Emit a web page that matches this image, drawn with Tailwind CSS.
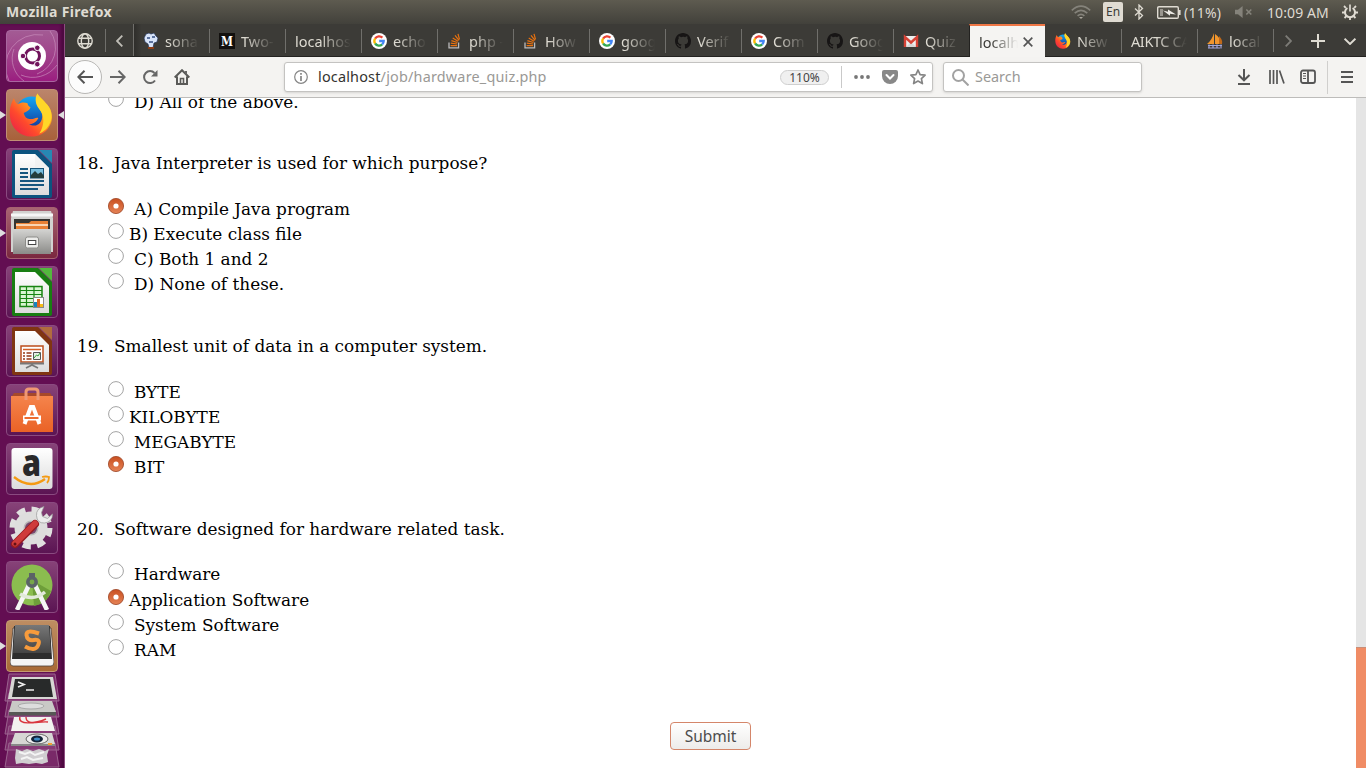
<!DOCTYPE html>
<html lang="en">
<head>
<meta charset="utf-8">
<title>Mozilla Firefox</title>
<script src="https://cdn.jsdelivr.net/npm/@tailwindcss/browser@4"></script>
</head>
<body class="w-[1366px] h-[768px] overflow-hidden bg-white font-['Noto_Sans',sans-serif] flex flex-col">

<svg width="0" height="0" class="absolute">
  <defs>
    <linearGradient id="paper" x1="0" y1="0" x2="0" y2="1"><stop offset="0" stop-color="#fff"/><stop offset="1" stop-color="#dcdcdc"/></linearGradient>
    <linearGradient id="fox" x1="1" y1="0" x2="0" y2="1"><stop offset="0" stop-color="#ffe226"/><stop offset=".4" stop-color="#ff9a1e"/><stop offset=".65" stop-color="#ff4a2c"/><stop offset="1" stop-color="#e3174f"/></linearGradient>
    <linearGradient id="globe" x1="0" y1="0" x2="0" y2="1"><stop offset="0" stop-color="#12a8f5"/><stop offset="1" stop-color="#123a9c"/></linearGradient>
    <linearGradient id="steel" x1="0" y1="0" x2="0" y2="1"><stop offset="0" stop-color="#d4d4d2"/><stop offset="1" stop-color="#8b8b88"/></linearGradient>
    <linearGradient id="bag" x1="0" y1="0" x2="0" y2="1"><stop offset="0" stop-color="#f5844c"/><stop offset="1" stop-color="#ea6226"/></linearGradient>
    <linearGradient id="keycap" x1="0" y1="0" x2="0" y2="1"><stop offset="0" stop-color="#777"/><stop offset="1" stop-color="#444"/></linearGradient>
    <linearGradient id="radio" x1="0" y1="0" x2="0" y2="1"><stop offset="0" stop-color="#c94f20"/><stop offset="1" stop-color="#e58356"/></linearGradient>
    <symbol id="firefox" viewBox="0 0 46 46">
      <circle cx="23" cy="20" r="16" fill="url(#globe)"/>
      <path d="M29 1c2 4 8 8 12 14 4 7 4 14 0 20-4 7-11 10-18 10C11 45 2 36 1 25 0 18 2 11 5 6c1 3 2 5 4 6 3-2 7-2 10-1 0 2 1 3 3 4-1 3-3 4-7 6 1 4 3 6 6 6 4 1 6-2 9-1-2 4-6 7-10 6 8 5 14-1 14-8 0-4-2-6-4-9-3-4-3-9-1-14z" fill="url(#fox)"/>
      <path d="M29 1c2 4 8 8 12 14 4 7 3 15-2 21-3 4-8 6-8 6 5-8 6-18 0-25-4-5-5-11-2-16z" fill="#ffd728"/>
    </symbol>
    <symbol id="google" viewBox="0 0 16 16">
      <circle cx="8" cy="8" r="8" fill="#fff"/>
      <g fill="none" stroke-width="2.3"><path d="M4.1 5.6A4.7 4.7 0 0 1 11.4 4.6" stroke="#ea4335"/><path d="M4.1 10.5A4.7 4.7 0 0 1 4.1 5.5" stroke="#fbbc05"/><path d="M11.2 11.4A4.7 4.7 0 0 1 4.1 10.5" stroke="#34a853"/><path d="M8.2 8h4.5A4.7 4.7 0 0 1 11.2 11.4" stroke="#4285f4"/></g>
    </symbol>
    <symbol id="stack" viewBox="0 0 16 16">
      <path d="M2 9.500v5.300h9.600V9.500" fill="none" stroke="#bcbbbb" stroke-width="1.300"/>
      <path d="M3.600 12.600h6.400M3.800 10.200l6.300.8M4.400 7.600l6 1.900M5.700 4.900l5.300 3.300M8 2.400l4 4.900M11 .8l1.500 5.600" stroke="#e8710f" stroke-width="1.200"/>
    </symbol>
    <symbol id="github" viewBox="0 0 16 16">
      <path fill="#171515" d="M8 0C3.58 0 0 3.58 0 8c0 3.54 2.29 6.53 5.47 7.59.4.07.55-.17.55-.38 0-.19-.01-.82-.01-1.49-2.01.37-2.53-.49-2.69-.94-.09-.23-.48-.94-.82-1.13-.28-.15-.68-.52-.01-.53.63-.01 1.08.58 1.23.82.72 1.21 1.87.87 2.33.66.07-.52.28-.87.51-1.07-1.78-.2-3.64-.89-3.64-3.95 0-.87.31-1.59.82-2.15-.08-.2-.36-1.02.08-2.12 0 0 .67-.21 2.2.82A7.6 7.6 0 0 1 8 3.87c.68 0 1.36.09 2 .27 1.53-1.04 2.2-.82 2.2-.82.44 1.1.16 1.92.08 2.12.51.56.82 1.27.82 2.15 0 3.07-1.87 3.75-3.65 3.95.29.25.54.73.54 1.48 0 1.07-.01 1.93-.01 2.2 0 .21.15.46.55.38A8.01 8.01 0 0 0 16 8c0-4.42-3.58-8-8-8z"/>
    </symbol>
    <symbol id="on" viewBox="0 0 16 16"><circle cx="8" cy="8" r="7.600" fill="url(#radio)" stroke="#9c4424" stroke-width=".8"/><circle cx="8" cy="8" r="2.600" fill="#fff"/></symbol>
    <symbol id="off" viewBox="0 0 16 16"><circle cx="8" cy="8" r="7.400" fill="#fff" stroke="#a3a3a3" stroke-width="1"/></symbol>
  </defs>
</svg>

<!-- System panel -->
<header class="h-6 shrink-0 bg-linear-to-b from-[#5e5b50] to-[#42413b] flex items-center justify-between pl-[6px] pr-[8px] text-[#dfdbd2]">
  <div class="text-[14px] font-bold tracking-[0.3px] leading-6">Mozilla Firefox</div>
  <div class="flex items-center h-6">
    <svg class="w-5 h-4 mr-[12px]" viewBox="0 0 20 16" fill="none" stroke="#85837b" stroke-width="1.600"><path d="M.8 6.300Q10-2 19.200 6.300M3.700 9.200Q10 3.500 16.300 9.200M6.600 11.800Q10 8.800 13.400 11.800"/><path d="M8 13h4l-2 2z" fill="#aaa79e" stroke="none"/></svg>
    <div class="w-5 h-5 rounded-[2px] bg-[#dfdbd2] text-[#3c3b37] text-[12px] leading-5 text-center mr-[11px]">En</div>
    <svg class="w-[10px] h-4 mr-[13px]" viewBox="0 0 10 16" fill="none" stroke="#dfdbd2" stroke-width="1.300"><path d="M1 4.500l7.500 7L5 15V1l3.500 3.500L1 11.500"/></svg>
    <svg class="w-6 h-[13px] mr-[3px]" viewBox="0 0 24 13" fill="none" stroke="#dfdbd2" stroke-width="1.400"><rect x=".7" y=".7" width="20.600" height="11.600" rx="1.200"/><path d="M22.600 4v5" stroke-width="2"/><path d="M3 3h3v7H3z" fill="#99968e" stroke="none"/><path d="M6 4.500l5 1.200V3.500l8 5-6-.8v2z" fill="#eceae4" stroke="none"/></svg>
    <div class="w-[38px] mr-[13px] whitespace-nowrap text-[14px] tracking-[0.25px]">(11%)</div>
    <svg class="w-[18px] h-3 mr-[14px]" viewBox="0 0 18 12"><path d="M0 3.800h3L7.600 0v12L3 8.200H0z" fill="#85837b"/><path d="M11.300 3.500l5 5m0-5l-5 5" stroke="#85837b" stroke-width="1.600"/></svg>
    <div class="w-[62px] mr-[13px] whitespace-nowrap tracking-[0.1px] text-[14px]">10:09 AM</div>
    <svg class="w-4 h-4" viewBox="0 0 16 16" fill="none" stroke="#dfdbd2"><path d="M5.400 4A5 5 0 1 0 10.600 4" stroke-width="2"/><path d="M8 .5v7" stroke-width="1.700"/><path d="M3.800 3.800L2 2M12.200 3.800L14 2M3 8.500H0M13 8.500h3M4.500 12L2.500 14M11.500 12l2 2M8 13.500V16" stroke-width="1.800"/></svg>
  </div>
</header>

<div class="flex h-[744px]">
  <!-- Launcher -->
  <aside class="w-[65px] shrink-0 h-full bg-[#630e52] border-r border-[#8d4c80] shadow-[inset_-3px_0_3px_#4d0a40] flex flex-col items-center pt-[6px] pr-px gap-[7px]">
    <div class="w-[52px] h-[52px] shrink-0 rounded-[4px] border border-[#a966a0] bg-linear-to-b from-[#a35b94] to-[#9b1d80] flex items-center justify-center">
      <svg class="w-[50px] h-[50px]" viewBox="0 0 50 50"><path d="M2 50A32 32 0 0 1 36 4M17 50A27 27 0 0 1 7 18M50 34A30 30 0 0 1 14 44M43 0A28 28 0 0 1 30 43" stroke="#cb91bf" stroke-width="1" fill="none" opacity=".65"/><circle cx="25" cy="25" r="14" fill="#fff"/><circle cx="25.500" cy="25" r="7" fill="none" stroke="#71145c" stroke-width="3"/><g fill="#71145c" stroke="#fff" stroke-width="1"><circle cx="16" cy="25" r="2.800"/><circle cx="30.300" cy="16.800" r="2.800"/><circle cx="30.300" cy="33.200" r="2.800"/></g></svg>
    </div>
    <div class="relative w-[52px] h-[52px] shrink-0 rounded-[4px] border border-[#c18f75] bg-linear-to-b from-[#bb856b] to-[#a8613a] flex items-center justify-center">
      <svg class="w-[45px] h-[46px]"><use href="#firefox"/></svg>
      <svg class="absolute -left-[7px] top-[21px] w-[6px] h-2" viewBox="0 0 6 8"><path d="M0 0l6 4-6 4z" fill="#dedede"/></svg>
      <svg class="absolute -right-[7px] top-[21px] w-[6px] h-2" viewBox="0 0 6 8"><path d="M6 0L0 4l6 4z" fill="#dedede"/></svg>
    </div>
    <div class="w-[52px] h-[52px] shrink-0 rounded-[4px] border border-[#8a4a80] bg-linear-to-b from-[#874278] to-[#5b1453] flex items-center justify-center">
      <svg class="w-[40px] h-[48px]" viewBox="0 0 40 48"><path d="M2 0h24l14 14v32a2 2 0 0 1-2 2H2a2 2 0 0 1-2-2V2a2 2 0 0 1 2-2z" fill="#0c537f"/><path d="M27 0h13v13z" fill="#2788b3"/><path d="M3 4h20l14 14v27H3z" fill="url(#paper)"/><path d="M23 4l14 14H23z" fill="#efefef" opacity=".7"/><path d="M8 19h8M8 23h8M8 27h8M8 31h24M8 35h24M8 39h18" stroke="#16567e" stroke-width="2"/><rect x="18.500" y="18.500" width="13" height="9.500" fill="#79bede" stroke="#175378"/><path d="M19 28v-3l4-4 3 3 3-2 3 4v2z" fill="#243d3d"/></svg>
    </div>
    <div class="relative w-[52px] h-[52px] shrink-0 rounded-[4px] border border-[#a66170] bg-linear-to-b from-[#a86473] to-[#7a273f] flex items-center justify-center">
      <svg class="w-[42px] h-[44px]" viewBox="0 0 42 44"><path d="M2 0h38l2 7v34H0V7z" fill="#d2d2d0"/><path d="M0 4h42" stroke="#f6f6f6" stroke-width="3"/><path d="M3 8h36v12H3z" fill="#353532"/><path d="M5 12h13l2-2h17v9H5z" fill="#e88135"/><path d="M5 14h32" stroke="#fff2dc" stroke-width="1.500"/><path d="M2 18h38v25H2z" fill="url(#steel)"/><rect x="14.500" y="26" width="13" height="11" rx="2" fill="#ececea" stroke="#8c8c89"/><rect x="17.300" y="29.500" width="7.500" height="4" fill="#fff" stroke="#444"/></svg>
      <svg class="absolute -left-[7px] top-[21px] w-[6px] h-2" viewBox="0 0 6 8"><path d="M0 0l6 4-6 4z" fill="#dedede"/></svg>
    </div>
    <div class="w-[52px] h-[52px] shrink-0 rounded-[4px] border border-[#8a4a80] bg-linear-to-b from-[#874278] to-[#5b1453] flex items-center justify-center">
      <svg class="w-[40px] h-[48px]" viewBox="0 0 40 48"><path d="M2 0h24l14 14v32a2 2 0 0 1-2 2H2a2 2 0 0 1-2-2V2a2 2 0 0 1 2-2z" fill="#187d12"/><path d="M27 0h13v13z" fill="#53b83e"/><path d="M3 4h20l14 14v27H3z" fill="url(#paper)"/><path d="M8 18.500h22v20H8z" fill="#d9f5d2" stroke="#188412" stroke-width="1.500"/><path d="M8 22.500h22M8 26.500h22M8 30.500h22M8 34.500h22M14.500 18v21M22 18v21" stroke="#188412" stroke-width="1.200"/><rect x="21.500" y="29.500" width="10" height="10" fill="#fff" stroke="#888"/><path d="M22 34h3v5h-3z" fill="#1683bd"/><path d="M25 31h3v8h-3z" fill="#e0641f"/><path d="M28 36h3v3h-3z" fill="#f6bc16"/></svg>
    </div>
    <div class="w-[52px] h-[52px] shrink-0 rounded-[4px] border border-[#8a4a80] bg-linear-to-b from-[#874278] to-[#5b1453] flex items-center justify-center">
      <svg class="w-[40px] h-[48px]" viewBox="0 0 40 48"><path d="M2 0h24l14 14v32a2 2 0 0 1-2 2H2a2 2 0 0 1-2-2V2a2 2 0 0 1 2-2z" fill="#803512"/><path d="M27 0h13v13z" fill="#b16c3e"/><path d="M3 4h20l14 14v27H3z" fill="url(#paper)"/><rect x="9" y="19" width="22" height="16" fill="#fff" stroke="#bc4e1c" stroke-width="1.500"/><path d="M11 22.500h18" stroke="#d35e27" stroke-width="1.500"/><path d="M11 26h2M11 29h2M11 32h2M14.500 26h5M14.500 29h5M14.500 32h5" stroke="#953914" stroke-width="1.500"/><path d="M21.500 25.500h7v7h-7z" fill="#e6f1e5" stroke="#555"/><path d="M22 31l2.500-3 1.500 1 2-3" stroke="#35a33c" fill="none"/><path d="M8 36.500h24M20 36v2l-6 3M20 38l6 3" stroke="#777" stroke-width="1.800" fill="none"/></svg>
    </div>
    <div class="w-[52px] h-[52px] shrink-0 rounded-[4px] border border-[#8a4a80] bg-linear-to-b from-[#874278] to-[#5b1453] flex items-center justify-center">
      <svg class="w-[42px] h-[46px]" viewBox="0 0 42 46"><path d="M1 9l2-3h36l2 3z" fill="#a6492a"/><path d="M0 9h42v36H0z" fill="url(#bag)"/><path d="M15 13V5q0-3 3-3h6q3 0 3 3v8" fill="none" stroke="#ef9874" stroke-width="3"/><path d="M13.500 37l6.300-17h2.400l6.300 17" fill="none" stroke="#fff" stroke-width="4"/><path d="M12 31h18" stroke="#fff" stroke-width="5"/><path d="M13.500 31h14" stroke="#ed6c30" stroke-width="2"/></svg>
    </div>
    <div class="w-[52px] h-[52px] shrink-0 rounded-[4px] border border-[#8a4a80] bg-linear-to-b from-[#874278] to-[#5b1453] flex items-center justify-center">
      <svg class="w-[42px] h-[42px]" viewBox="0 0 42 42"><rect x=".5" width="41" height="41" rx="3" fill="url(#paper)"/><text x="20.500" y="27.500" font-family="Open Sans" font-weight="800" font-size="37" text-anchor="middle" textLength="19" lengthAdjust="spacingAndGlyphs" fill="#28282a">a</text><path d="M3 29q16 13 31 2" fill="none" stroke="#f49a13" stroke-width="2.300"/><path d="M31 29q4-1 7 0 0 4-2 6" fill="none" stroke="#f49a13" stroke-width="1.800"/></svg>
    </div>
    <div class="w-[52px] h-[52px] shrink-0 rounded-[4px] border border-[#8a4a80] bg-linear-to-b from-[#874278] to-[#5b1453] flex items-center justify-center">
      <svg class="w-[46px] h-[46px]" viewBox="0 0 46 46"><circle cx="22" cy="23" r="18" fill="none" stroke="#e0e0df" stroke-width="7" stroke-dasharray="8 6.137"/><circle cx="22" cy="23" r="12" fill="#b9b9b7" stroke="#dededd" stroke-width="9"/><circle cx="22" cy="23" r="6" fill="#78486f"/><path d="M22 24L34 12" stroke="#dcdcda" stroke-width="5"/><path d="M35 1.500q-8 2-7.500 9 .5 8 8 7.500 8-1 8-9l-5 4.500-5-2-1-4z" fill="#ececec" stroke="#999" stroke-width=".7"/><path d="M6 39l20-20" stroke="#961b20" stroke-width="8" stroke-linecap="round"/><path d="M6 38.500l20-20" stroke="#cf3b3a" stroke-width="6" stroke-linecap="round"/><circle cx="6" cy="39" r="1.500" fill="#621014"/></svg>
    </div>
    <div class="w-[52px] h-[52px] shrink-0 rounded-[4px] border border-[#8a4a80] bg-linear-to-b from-[#874278] to-[#5b1453] flex items-center justify-center">
      <svg class="w-[42px] h-[46px]" viewBox="0 0 42 46"><circle cx="21" cy="21" r="20.500" fill="#8bbd4f"/><path d="M21 16l19 11q-4 13-17 15z" fill="#6e9e3a"/><path d="M6 46l12-25M36 46L24 21" stroke="#f5f5f5" stroke-width="4.500"/><path d="M9 30q13 8 25-2" fill="none" stroke="#e1e9d9" stroke-width="3.500"/><path d="M18 9h6v6h-6z" fill="#5b6366"/><circle cx="21" cy="18" r="4.200" fill="#77a649" stroke="#5b6366" stroke-width="3.500"/></svg>
    </div>
    <div class="relative w-[52px] h-[52px] shrink-0 rounded-[4px] border border-[#c49a70] bg-linear-to-b from-[#be8d62] to-[#a86a36] flex items-center justify-center">
      <svg class="w-[44px] h-[42px]" viewBox="0 0 44 42"><path d="M3 3h38l3 34q0 4-3 4H3q-3 0-3-4z" fill="#f4f4f4" stroke="#4b4038" stroke-width=".8"/><path d="M4 1h36l2 33H2z" fill="#2d2d2d"/><path d="M5 0h34l2 28H3z" fill="url(#keycap)"/><path d="M29 8.500Q16 4 16.500 10T24 15t4 5.500-13 1" fill="none" stroke="#f79b3c" stroke-width="4"/></svg>
      <svg class="absolute -left-[7px] top-[21px] w-[6px] h-2" viewBox="0 0 6 8"><path d="M0 0l6 4-6 4z" fill="#dedede"/></svg>
    </div>
    <svg class="w-[60px] h-[95px] shrink-0 -mt-[6px]" viewBox="0 0 60 95">
      <g fill="#a35c92" fill-opacity=".35" stroke="#9b648f" stroke-width="1"><path d="M7 1h46l4 27H3z"/><path d="M7 20h46l4 24H3z"/><path d="M7 37h46l4 24H3z"/><path d="M7 53h46l4 24H3z"/><path d="M7 70h46l4 24H3z"/></g>
      <path d="M10 4h41l4 22H6z" fill="#d7d7d4"/><path d="M13 6h35l3 18H10z" fill="#282a2a"/><path d="M16 9l6 2.500-6 2.500M24 17h8" fill="none" stroke="#eee" stroke-width="1.700"/>
      <path d="M10 28h40l4 11H7z" fill="#c9c9c6"/><path d="M7 39h47v3.500H7z" fill="#575755"/><ellipse cx="29" cy="33" rx="13" ry="3" fill="#ddd" stroke="#aaa"/>
      <path d="M12 44h37l4 14H9z" fill="#f3f2ef"/><path d="M18 44c-3 8 15 7 26 2M24 44c0 9 12 4 22 5" stroke="#d9363d" stroke-width="1.400" fill="none"/>
      <path d="M13 60h37l3 11H9z" fill="#d7d7d4"/><path d="M9 71h44v2H9z" fill="#888"/><ellipse cx="35" cy="66" rx="11" ry="5" fill="#eee" stroke="#666"/><ellipse cx="35" cy="66" rx="6" ry="3.500" fill="#14253a"/><ellipse cx="35" cy="66" rx="3" ry="1.500" fill="#3e8dc6"/><path d="M46 70h4v2h-4z" fill="#f2a032"/>
      <path d="M14 76l6 2 5-2 6 2 6-2 6 2 4-2-2 6 1 7-6 2-6-1-7 1-7-1-6 1-1-6z" fill="#d0cdd0"/><path d="M17 79l6 2 5-2 5 3 9-3M19 86l6-2 6 3 10-2" stroke="#f4f4f4" stroke-width="2" fill="none"/>
    </svg>
  </aside>

  <div class="flex-1 flex flex-col">
    <!-- Tab strip -->
    <nav class="h-[33px] pt-[2px] shrink-0 bg-[#3c3b37] border-b border-[#232220] flex text-[14.500px] leading-[30px] text-[#dedbd2]">
      <div class="w-10 flex items-center justify-center"><svg class="w-4 h-4" viewBox="0 0 16 16" fill="none" stroke="#dedbd2" stroke-width="1.400"><circle cx="8" cy="8" r="7.200"/><ellipse cx="8" cy="8" rx="3.700" ry="7.200"/><path d="M1.500 5.200h13M1.500 10.800h13"/></svg></div>
      <div class="w-[28px] mt-[3px] mb-1 border-l border-[#706f6b] flex items-center justify-center"><svg class="w-[7px] h-3" viewBox="0 0 7 12" fill="none" stroke="#bfbdb6" stroke-width="1.800"><path d="M6.300.6L1 6l5.300 5.400"/></svg></div>
      <div class="w-[76px] -mt-[2px] pt-[2px] flex items-center pl-[9px] border-l border-[#706f6b] bg-linear-to-r from-[#2f2e2b] to-[#3c3b37] to-10%">
        <svg class="w-4 h-4 shrink-0 mr-[6px]" viewBox="0 0 16 16"><path d="M3 1l3-1 2 1 3-1 2 3 2 2-1 4-3 1-1 5H6L5 11 2 9 1 5z" fill="#d7e3f8" stroke="#243356" stroke-width=".7"/><path d="M4 4h3v2H4zM9 3h3v2H9zM6 8h4v2H6z" fill="#5b719e"/><path d="M5 14h6v2H5z" fill="#8c3d16"/></svg>
        <div class="w-[34px] overflow-hidden whitespace-nowrap [mask-image:linear-gradient(to_right,#000_10%,transparent)]">sona</div>
      </div>
      <div class="w-[76px] flex items-center pl-[10px] relative before:absolute before:left-0 before:top-[3px] before:h-6 before:w-px before:bg-[#706f6b]">
        <svg class="w-4 h-4 shrink-0 mr-[6px]" viewBox="0 0 16 16"><rect width="16" height="16" fill="#12100e"/><text x="8" y="12.500" text-anchor="middle" font-family="DejaVu Serif" font-weight="700" font-size="13" textLength="12" lengthAdjust="spacingAndGlyphs" fill="#fff">M</text></svg>
        <div class="w-[34px] overflow-hidden whitespace-nowrap [mask-image:linear-gradient(to_right,#000_10%,transparent)]">Two-</div>
      </div>
      <div class="w-[76px] flex items-center pl-[10px] relative before:absolute before:left-0 before:top-[3px] before:h-6 before:w-px before:bg-[#706f6b]">
        <div class="w-[56px] overflow-hidden whitespace-nowrap [mask-image:linear-gradient(to_right,#000_45%,transparent)]">localhos</div>
      </div>
      <div class="w-[76px] flex items-center pl-[10px] relative before:absolute before:left-0 before:top-[3px] before:h-6 before:w-px before:bg-[#706f6b]">
        <svg class="w-4 h-4 shrink-0 mr-[6px]"><use href="#google"/></svg>
        <div class="w-[34px] overflow-hidden whitespace-nowrap [mask-image:linear-gradient(to_right,#000_10%,transparent)]">echo</div>
      </div>
      <div class="w-[76px] flex items-center pl-[10px] relative before:absolute before:left-0 before:top-[3px] before:h-6 before:w-px before:bg-[#706f6b]">
        <svg class="w-4 h-4 shrink-0 mr-[6px]"><use href="#stack"/></svg>
        <div class="w-[34px] overflow-hidden whitespace-nowrap [mask-image:linear-gradient(to_right,#000_10%,transparent)]">php -</div>
      </div>
      <div class="w-[76px] flex items-center pl-[10px] relative before:absolute before:left-0 before:top-[3px] before:h-6 before:w-px before:bg-[#706f6b]">
        <svg class="w-4 h-4 shrink-0 mr-[6px]"><use href="#stack"/></svg>
        <div class="w-[34px] overflow-hidden whitespace-nowrap [mask-image:linear-gradient(to_right,#000_10%,transparent)]">How</div>
      </div>
      <div class="w-[76px] flex items-center pl-[10px] relative before:absolute before:left-0 before:top-[3px] before:h-6 before:w-px before:bg-[#706f6b]">
        <svg class="w-4 h-4 shrink-0 mr-[6px]"><use href="#google"/></svg>
        <div class="w-[34px] overflow-hidden whitespace-nowrap [mask-image:linear-gradient(to_right,#000_10%,transparent)]">goog</div>
      </div>
      <div class="w-[76px] flex items-center pl-[10px] relative before:absolute before:left-0 before:top-[3px] before:h-6 before:w-px before:bg-[#706f6b]">
        <svg class="w-4 h-4 shrink-0 mr-[6px]"><use href="#github"/></svg>
        <div class="w-[34px] overflow-hidden whitespace-nowrap [mask-image:linear-gradient(to_right,#000_10%,transparent)]">Verif</div>
      </div>
      <div class="w-[76px] flex items-center pl-[10px] relative before:absolute before:left-0 before:top-[3px] before:h-6 before:w-px before:bg-[#706f6b]">
        <svg class="w-4 h-4 shrink-0 mr-[6px]"><use href="#google"/></svg>
        <div class="w-[34px] overflow-hidden whitespace-nowrap [mask-image:linear-gradient(to_right,#000_10%,transparent)]">Com</div>
      </div>
      <div class="w-[76px] flex items-center pl-[10px] relative before:absolute before:left-0 before:top-[3px] before:h-6 before:w-px before:bg-[#706f6b]">
        <svg class="w-4 h-4 shrink-0 mr-[6px]"><use href="#github"/></svg>
        <div class="w-[34px] overflow-hidden whitespace-nowrap [mask-image:linear-gradient(to_right,#000_10%,transparent)]">Goog</div>
      </div>
      <div class="w-[76px] flex items-center pl-[10px] relative before:absolute before:left-0 before:top-[3px] before:h-6 before:w-px before:bg-[#706f6b]">
        <svg class="w-4 h-4 shrink-0 mr-[6px]" viewBox="0 0 16 16"><path d="M1 3h14v11H1z" fill="#eee"/><path d="M3 14l5-5 5 5" fill="#d8d8d8"/><path d="M2 14V4l6 5.500L14 4v10" fill="none" stroke="#d54236" stroke-width="2.400"/></svg>
        <div class="w-[34px] overflow-hidden whitespace-nowrap [mask-image:linear-gradient(to_right,#000_10%,transparent)]">Quiz</div>
      </div>
      <div class="w-[76px] h-[33px] -mt-[2px] -mr-px flex items-center pl-[9px] bg-[#f5f4f2] border-t-2 border-[#f07746] border-l border-l-[#232220] text-[#3c3b37]">
        <div class="w-[39px] overflow-hidden whitespace-nowrap [mask-image:linear-gradient(to_right,#000_30%,transparent)]">localh</div>
        <svg class="w-[10px] h-[10px] ml-[5px]" viewBox="0 0 10 10" stroke="#555" stroke-width="1.700"><path d="M.7.7l8.600 8.600M9.300.7L.7 9.300"/></svg>
      </div>
      <div class="w-[77px] flex items-center pl-[11px]">
        <svg class="w-4 h-4 shrink-0 mr-[6px]"><use href="#firefox"/></svg>
        <div class="w-[34px] overflow-hidden whitespace-nowrap [mask-image:linear-gradient(to_right,#000_10%,transparent)]">New</div>
      </div>
      <div class="w-[76px] flex items-center pl-[10px] relative before:absolute before:left-0 before:top-[3px] before:h-6 before:w-px before:bg-[#706f6b]">
        <div class="w-[56px] overflow-hidden whitespace-nowrap tracking-[-0.4px] [mask-image:linear-gradient(to_right,#000_45%,transparent)]">AIKTC CA</div>
      </div>
      <div class="w-[76px] flex items-center pl-[10px] relative before:absolute before:left-0 before:top-[3px] before:h-6 before:w-px before:bg-[#706f6b]">
        <svg class="w-4 h-4 shrink-0 mr-[6px]" viewBox="0 0 16 16"><path d="M7 0v11H0q5-4 7-11zM8 1q6 4 6 10H8z" fill="#f1962d"/><path d="M12 3q4 4 3 8h-3z" fill="#c1691a"/><path d="M1 12.500h14M1 15h12M2 11.500v4M6 11.500v4M10 11.500v4M14 11.500v4" stroke="#a4a5d7" stroke-width="1.200"/></svg>
        <div class="w-[34px] overflow-hidden whitespace-nowrap [mask-image:linear-gradient(to_right,#000_10%,transparent)]">local</div>
      </div>
      <div class="w-[30px] mt-[3px] mb-1 border-l border-[#706f6b] flex items-center justify-center"><svg class="w-[7px] h-3" viewBox="0 0 7 12" fill="none" stroke="#7d7c77" stroke-width="1.800"><path d="M.7.6L6 6 .7 11.400"/></svg></div>
      <div class="w-[30px] flex items-center justify-center"><svg class="w-[14px] h-[14px]" viewBox="0 0 14 14" stroke="#dedbd2" stroke-width="2"><path d="M7 0v14M0 7h14"/></svg></div>
      <div class="w-[33px] flex items-center justify-center"><svg class="w-3 h-[7px]" viewBox="0 0 12 7" fill="none" stroke="#dedbd2" stroke-width="1.900"><path d="M.6.7L6 6 11.400.7"/></svg></div>
    </nav>

    <!-- Navigation toolbar -->
    <div class="h-[41px] shrink-0 bg-[#f4f3f1] border-b border-[#bdbcba] flex items-center text-[14.400px] text-[#9a9996]">
      <div class="ml-[3px] w-[34px] h-[34px] rounded-full border border-[#b8b7b5] bg-[#fcfcfc] flex items-center justify-center"><svg class="w-4 h-[14px]" viewBox="0 0 16 14" fill="none" stroke="#555" stroke-width="2"><path d="M16 7H1.500M7.500.8L1.300 7l6.200 6.200"/></svg></div>
      <svg class="ml-2 w-4 h-[14px]" viewBox="0 0 16 14" fill="none" stroke="#666" stroke-width="2"><path d="M0 7h14.500M8.500.8L14.700 7l-6.200 6.200"/></svg>
      <svg class="ml-4 w-4 h-4" viewBox="0 0 16 16" fill="none" stroke="#666" stroke-width="2"><path d="M13 11.500A6 6 0 1 1 12.500 4"/><path d="M15.500 1v6.500H9z" fill="#666" stroke="none"/></svg>
      <svg class="ml-4 w-4 h-4" viewBox="0 0 16 16" fill="none" stroke="#5a5a58" stroke-width="2"><path d="M.7 8.500L8 1.200l7.300 7.300M3 7.500V15h10V7.500"/><path d="M6.500 15V9.500h3V15" stroke-width="1.600"/><path d="M11 2h2v4l-2-2z" fill="#666" stroke="none"/></svg>
      <div class="ml-[94px] w-[649px] h-[30px] rounded-[3px] border border-[#c4c3c1] bg-white shadow-sm flex items-center pl-[9px]">
        <svg class="w-[14px] h-[14px] mr-[10px]" viewBox="0 0 14 14" fill="none" stroke="#858585" stroke-width="1.200"><circle cx="7" cy="7" r="6.300"/><path d="M7 6v5M7 3v1.700" stroke-width="1.700"/></svg>
        <div class="w-[462px] tracking-[0.200px]"><span class="text-[#33322f]">localhost</span>/job/hardware_quiz.php</div>
        <div class="w-[49px] h-[15px] rounded-full border border-[#cfcfcf] bg-[#f0f0f0] text-[#444] text-[12px] leading-[13px] text-center">110%</div>
        <div class="w-px h-[22px] bg-[#c9c9c9] ml-[12px] mr-[12px]"></div>
        <svg class="w-4 h-4 mr-3" viewBox="0 0 16 16" fill="#777"><circle cx="2" cy="8" r="1.900"/><circle cx="8" cy="8" r="1.900"/><circle cx="14" cy="8" r="1.900"/></svg>
        <svg class="w-4 h-4 mr-3" viewBox="0 0 16 16"><path d="M2 1h12a2 2 0 0 1 2 2v4a8 8 0 0 1-16 0V3a2 2 0 0 1 2-2z" fill="#888"/><path d="M4.500 6L8 9.500 11.500 6" fill="none" stroke="#fff" stroke-width="2" stroke-linecap="round"/></svg>
        <svg class="w-4 h-4" viewBox="0 0 16 16" fill="none" stroke="#858585" stroke-width="1.700" stroke-linejoin="round"><path d="M8 1l2.100 4.600 5 .6-3.700 3.400 1 5L8 12.100l-4.400 2.500 1-5L.9 6.200l5-.6z"/></svg>
      </div>
      <div class="ml-[10px] w-[199px] h-[30px] rounded-[3px] border border-[#c4c3c1] bg-white shadow-sm flex items-center pl-[8px]">
        <svg class="w-[17px] h-[17px] mr-[6px]" viewBox="0 0 17 17" fill="none" stroke="#a2a2a2" stroke-width="2"><circle cx="6.500" cy="6.500" r="5.500"/><path d="M10.500 10.500l6 6"/></svg>Search
      </div>
      <svg class="ml-[95px] w-[14px] h-4" viewBox="0 0 14 16" fill="none" stroke="#555" stroke-width="2"><path d="M7 0v11M1.500 6L7 11.300 12.500 6M1 15h12"/></svg>
      <svg class="ml-[18px] w-4 h-4" viewBox="0 0 16 16" fill="none" stroke="#555" stroke-width="1.700"><path d="M1 1v14M4.500 1v14M8 1v14M10.500 1.500l4.500 13"/></svg>
      <svg class="ml-[15px] w-4 h-4" viewBox="0 0 16 16" fill="none" stroke="#555" stroke-width="1.800"><rect x="1" y="1.500" width="14" height="12.500" rx="2"/><path d="M8 2v12"/><path d="M3 4.500h3M3 7h3M3 9.500h3" stroke-width="1.200"/></svg>
      <div class="ml-[11px] w-px h-[33px] bg-[#d0cfcd]"></div>
      <svg class="ml-[13px] w-3 h-3" viewBox="0 0 12 12" stroke="#555" stroke-width="2"><path d="M0 1h12M0 6h12M0 11h12"/></svg>
    </div>

    <!-- Page -->
    <div class="h-[670px] flex overflow-hidden bg-white">
      <main class="flex-1 pl-[12px] text-black text-[16.900px] leading-[25px] whitespace-nowrap font-['DejaVu_Serif',serif]">
        <div class="-mt-2 ml-[31px]">
          <label class="flex h-[25px]"><svg class="w-4 h-4 mt-px mr-[10px]"><use href="#off"/></svg>D) All of the above.</label>
        </div>
        <h2 class="mt-9 flex"><span class="w-[37px]">18.</span>Java Interpreter is used for which purpose?</h2>
        <div class="mt-[21px] ml-[31px]">
          <label class="flex h-[25px]"><svg class="w-4 h-4 mt-px mr-[10px]"><use href="#on"/></svg>A) Compile Java program</label>
          <label class="flex h-[25px]"><svg class="w-4 h-4 mt-px mr-[5px]"><use href="#off"/></svg>B) Execute class file</label>
          <label class="flex h-[25px]"><svg class="w-4 h-4 mt-px mr-[10px]"><use href="#off"/></svg>C) Both 1 and 2</label>
          <label class="flex h-[25px]"><svg class="w-4 h-4 mt-px mr-[10px]"><use href="#off"/></svg>D) None of these.</label>
        </div>
        <h2 class="mt-[37px] flex"><span class="w-[37px]">19.</span>Smallest unit of data in a computer system.</h2>
        <div class="mt-[21px] ml-[31px]">
          <label class="flex h-[25px]"><svg class="w-4 h-4 mt-px mr-[10px]"><use href="#off"/></svg>BYTE</label>
          <label class="flex h-[25px]"><svg class="w-4 h-4 mt-px mr-[5px]"><use href="#off"/></svg>KILOBYTE</label>
          <label class="flex h-[25px]"><svg class="w-4 h-4 mt-px mr-[10px]"><use href="#off"/></svg>MEGABYTE</label>
          <label class="flex h-[25px]"><svg class="w-4 h-4 mt-px mr-[10px]"><use href="#on"/></svg>BIT</label>
        </div>
        <h2 class="mt-[37px] flex"><span class="w-[37px]">20.</span>Software designed for hardware related task.</h2>
        <div class="mt-[20px] ml-[31px]">
          <label class="flex h-[26px]"><svg class="w-4 h-4 mt-px mr-[10px]"><use href="#off"/></svg>Hardware</label>
          <label class="flex h-[25px]"><svg class="w-4 h-4 mt-px mr-[5px]"><use href="#on"/></svg>Application Software</label>
          <label class="flex h-[25px]"><svg class="w-4 h-4 mt-px mr-[10px]"><use href="#off"/></svg>System Software</label>
          <label class="flex h-[25px]"><svg class="w-4 h-4 mt-px mr-[10px]"><use href="#off"/></svg>RAM</label>
        </div>
        <button class="block mt-[59px] ml-[593px] w-[81px] h-[28px] rounded-[4px] border border-[#d4866a] bg-linear-to-b from-white to-[#edecea] font-['Noto_Sans',sans-serif] text-[15.500px] leading-[26px] text-[#4c4c4c]">Submit</button>
      </main>
      <div class="w-[10px] bg-[#e5e5e5] pt-[549px]"><div class="h-[121px] bg-[#f08c65] border-t border-[#c98e78]"></div></div>
    </div>
  </div>
</div>
</body>
</html>
